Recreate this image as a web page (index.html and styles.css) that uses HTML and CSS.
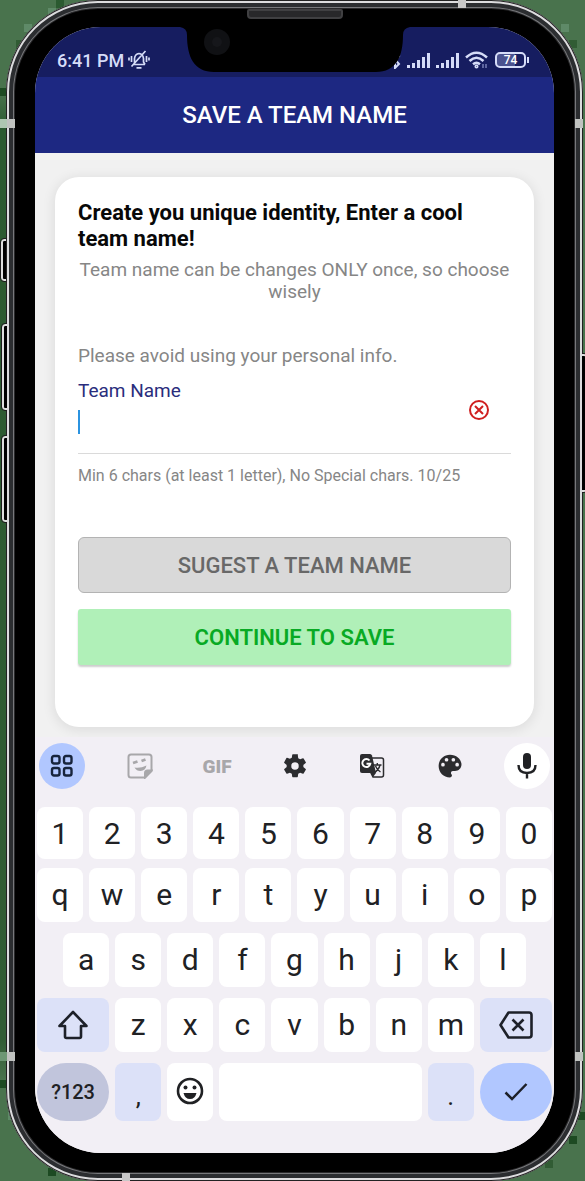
FILE: index.html
```
<!DOCTYPE html>
<html lang="en">
<head>
<meta charset="utf-8">
<meta name="viewport" content="width=device-width, initial-scale=1">
<title>Save a team name</title>
<link rel="stylesheet" href="styles.css">
</head>
<body>
<div class="phone">
  <span class="side-button mute"></span>
  <span class="side-button volume-up"></span>
  <span class="side-button volume-down"></span>
  <span class="side-button power"></span>
  <span class="band band-top-left"></span>
  <span class="band band-top-right"></span>
  <span class="band band-bottom-left"></span>
  <span class="band band-bottom-right"></span>
  <span class="band-flat band-top"></span>
  <span class="band-flat band-bottom"></span>
  <span class="speaker"></span>
  <div class="screen">
    <svg class="notch" width="230" height="46" viewBox="0 0 230 46" aria-hidden="true">
      <path d="M0 0Q7 1 7 8C7 30 14 45 34 45H196C216 45 223 30 223 8Q223 1 230 0Z"/>
      <circle cx="37" cy="15" r="13" fill="#101114"/><circle cx="37" cy="15" r="5" fill="#16171b"/>
    </svg>
    <div class="status">
      <span class="time">6:41 PM</span>
      <svg class="bell" width="22" height="20" viewBox="0 0 22 20" fill="none" stroke="#d5dcf8" stroke-width="1.7" aria-hidden="true">
        <path d="M5 14.500h12M6.500 14V8.500Q7 4 11 3.500Q15 4 15.500 8.500V12l1.500 2.500M3.500 16.500L17.500 1M8.500 17.800h5M3.500 6v6M1 7.500v3M18.500 6v6M21 7.500v3"/>
      </svg>
      <div class="indicators">
        <svg class="bluetooth" width="10" height="18" viewBox="0 0 10 18" fill="none" stroke="#d5dcf8" stroke-width="2" aria-hidden="true"><path d="M1 5l7 8-4 4V1l4 4-7 8"/></svg>
        <svg width="24" height="16" viewBox="0 0 24 16" fill="#d5dcf8" aria-hidden="true"><path d="M0 13h3v3H0zM5 11h3v5H5zM10 8h3v8h-3zM15 5h3v11h-3zM20 1h3v15h-3z"/></svg>
        <svg width="24" height="16" viewBox="0 0 24 16" fill="#d5dcf8" aria-hidden="true"><path d="M0 13h3v3H0zM5 11h3v5H5zM10 8h3v8h-3zM15 5h3v11h-3zM20 1h3v15h-3z"/></svg>
        <svg width="23" height="18" viewBox="0 0 23 18" fill="none" stroke="#d5dcf8" stroke-width="2.500" aria-hidden="true"><path d="M1 6.500Q11.500-3 22 6.500M4.500 10Q11.500 3.500 18.500 10M8 13.300Q11.500 10.500 15 13.300"/><circle cx="11.500" cy="15.500" r=".8"/><path d="M18 13v4M21 13v4" stroke="#8f98cc" stroke-width="1.200"/></svg>
        <span class="battery">74</span>
      </div>
    </div>
    <header class="app-bar"><h1>SAVE A TEAM NAME</h1></header>
    <main class="content">
      <form class="card">
        <h2>Create you unique identity, Enter a cool team name!</h2>
        <p class="note">Team name can be changes ONLY once, so choose wisely</p>
        <p class="advice">Please avoid using your personal info.</p>
        <div class="field">
          <div class="field-text">
            <label for="team">Team Name</label>
            <input id="team" type="text" autocomplete="off">
          </div>
          <button class="clear" type="button" aria-label="Clear">
            <svg width="22" height="22" viewBox="0 0 22 22" fill="none" stroke="#cf1f1f" stroke-width="2"><circle cx="11" cy="11" r="9"/><path d="M7 7l8 8M15 7l-8 8"/></svg>
          </button>
        </div>
        <p class="helper">Min 6 chars (at least 1 letter), No Special chars. 10/25</p>
        <button class="action suggest" type="button">SUGEST A TEAM NAME</button>
        <button class="action save" type="button">CONTINUE TO SAVE</button>
      </form>
    </main>
    <section class="keyboard" aria-label="Keyboard">
      <div class="tools">
        <button class="tool round blue" aria-label="Menu"><svg width="24" height="24" viewBox="0 0 24 24" fill="none" stroke="#17243d" stroke-width="2.400"><rect x="2" y="2" width="7.500" height="7.500" rx="2"/><rect x="14" y="2" width="7.500" height="7.500" rx="2"/><rect x="2" y="14" width="7.500" height="7.500" rx="2"/><rect x="14" y="14" width="7.500" height="7.500" rx="2"/></svg></button>
        <button class="tool" aria-label="Stickers"><svg width="26" height="26" viewBox="0 0 26 26" fill="none" stroke="#a8a7aa" stroke-width="2"><path d="M4 1.500h18q2.500 0 2.500 2.500v14l-6.500 6.500H4Q1.500 24.500 1.500 22V4Q1.500 1.500 4 1.500Z"/><path d="M24.500 17.500h-4q-2.500 0-2.500 2.500v4.500Z" fill="#a8a7aa"/><path d="M6 10l4.500-1.500M14.500 8l4-1.500" stroke-width="2.800"/><path d="M7.500 14.500q6 1 12-2q-1 5-6 5.500q-4 0-6-3.500Z" fill="#a8a7aa" stroke="none"/></svg></button>
        <button class="tool gif">GIF</button>
        <button class="tool" aria-label="Settings"><svg width="28" height="28" viewBox="0 0 24 24" fill="#2c2c2f"><path d="M19.140 12.940c.04-.3.060-.61.060-.94s-.02-.64-.07-.94l2.030-1.580a.49.490 0 0 0 .12-.61l-1.920-3.320a.49.490 0 0 0-.59-.22l-2.390.96a7 7 0 0 0-1.620-.94l-.36-2.540A.48.480 0 0 0 13.920 2h-3.840a.48.480 0 0 0-.47.410l-.36 2.540c-.59.240-1.130.57-1.620.94l-2.390-.96a.49.490 0 0 0-.59.220L2.740 8.870a.48.480 0 0 0 .12.610l2.030 1.580a7.500 7.500 0 0 0 0 1.880l-2.030 1.580a.49.490 0 0 0-.12.610l1.920 3.320c.12.220.37.290.59.220l2.390-.96c.5.380 1.030.7 1.620.94l.36 2.540c.05.240.24.410.47.410h3.840c.24 0 .44-.17.470-.41l.36-2.540a7 7 0 0 0 1.620-.94l2.390.96c.22.080.47 0 .59-.22l1.920-3.320a.48.480 0 0 0-.12-.61zM12 15.200a3.200 3.200 0 1 1 0-6.400 3.200 3.200 0 0 1 0 6.400z"/></svg></button>
        <button class="tool" aria-label="Translate"><svg width="26" height="26" viewBox="0 0 26 26"><path d="M13 5h9.500Q24.500 5 24.500 7v15q0 2-2 2H14l-3-6" fill="none" stroke="#2c2c2f" stroke-width="1.500"/><path d="M3 1h8q1.500 0 2 1.500L17 20H3q-2 0-2-2V3q0-2 2-2Z" fill="#2c2c2f"/><path d="M10.500 7.500a4 4 0 1 0 .8 3.300H7.500" fill="none" stroke="#fff" stroke-width="1.900"/><path d="M14.500 12h8M18.300 10v2M21 12q-1 4.500-6 8M16.500 13q1.500 4 5 6" fill="none" stroke="#2c2c2f" stroke-width="1.400"/><path d="M12 20h5l-3 4Z" fill="#2c2c2f"/></svg></button>
        <button class="tool" aria-label="Themes"><svg width="26" height="26" viewBox="0 0 24 24" fill="#2c2c2f"><path d="M12 1.500C6 1.500 1.500 6 1.500 12S6 22.500 12 22.500a1.800 1.800 0 0 0 1.300-3c-.3-.3-.4-.7-.4-1.100 0-1 .8-1.700 1.700-1.700h2c3.300 0 6-2.700 6-6 0-5.100-4.800-9.200-10.600-9.200zM5.500 12.500a1.700 1.700 0 1 1 0-3.400 1.700 1.700 0 0 1 0 3.400zm3.300-4.600a1.700 1.700 0 1 1 0-3.400 1.700 1.700 0 0 1 0 3.400zm6.300 0a1.700 1.700 0 1 1 0-3.400 1.700 1.700 0 0 1 0 3.400zm3.500 4.600a1.700 1.700 0 1 1 0-3.400 1.700 1.700 0 0 1 0 3.400z"/></svg></button>
        <button class="tool round white" aria-label="Voice"><svg width="22" height="28" viewBox="0 0 22 28"><rect x="7" y="1" width="8" height="16" rx="4" fill="#202124"/><path d="M2.500 13q0 8 8.500 8t8.500-8M11 21v5.500" fill="none" stroke="#202124" stroke-width="2.400"/></svg></button>
      </div>
      <div class="keys digits">
        <button class="key">1</button><button class="key">2</button><button class="key">3</button><button class="key">4</button><button class="key">5</button><button class="key">6</button><button class="key">7</button><button class="key">8</button><button class="key">9</button><button class="key">0</button>
      </div>
      <div class="keys letters">
        <button class="key">q</button><button class="key">w</button><button class="key">e</button><button class="key">r</button><button class="key">t</button><button class="key">y</button><button class="key">u</button><button class="key">i</button><button class="key">o</button><button class="key">p</button>
        <button class="key indent">a</button><button class="key">s</button><button class="key">d</button><button class="key">f</button><button class="key">g</button><button class="key">h</button><button class="key">j</button><button class="key">k</button><button class="key">l</button>
        <button class="key wide tint shift" aria-label="Shift"><svg width="32" height="30" viewBox="0 0 32 30" fill="none" stroke="#1d2029" stroke-width="2.600" stroke-linejoin="round"><path d="M16 2L2.500 16H8v10.500q0 1.500 1.500 1.500h13q1.500 0 1.500-1.500V16h5.500Z"/></svg></button><button class="key">z</button><button class="key">x</button><button class="key">c</button><button class="key">v</button><button class="key">b</button><button class="key">n</button><button class="key">m</button><button class="key wide tint" aria-label="Backspace"><svg width="34" height="28" viewBox="0 0 34 28" fill="none" stroke="#1d2029" stroke-width="2.600" stroke-linejoin="round"><path d="M9.500 1.500H30q2.500 0 2.500 2.500v20q0 2.500-2.500 2.500H9.500L1.500 14Z"/><path d="M13.500 8.500l11 11M24.500 8.500l-11 11"/></svg></button>
        <button class="key wide pill symbols">?123</button><button class="key tint mark">,</button><button class="key" aria-label="Emoji"><svg width="28" height="28" viewBox="0 0 28 28" fill="none" stroke="#202124" stroke-width="2.600"><circle cx="14" cy="14" r="12"/><path d="M7.500 16h13q-1.500 6-6.500 6t-6.500-6Z" fill="#202124" stroke="none"/><circle cx="9.500" cy="10.500" r="2" fill="#202124" stroke="none"/><circle cx="18.500" cy="10.500" r="2" fill="#202124" stroke="none"/></svg></button><button class="key space" aria-label="Space"></button><button class="key tint mark">.</button><button class="key wide pill done" aria-label="Done"><svg width="24" height="20" viewBox="0 0 24 20" fill="none" stroke="#1d2029" stroke-width="2.500"><path d="M1.500 10.500L8 17L22.500 2"/></svg></button>
      </div>
    </section>
  </div>
</div>
</body>
</html>
```
FILE: styles.css
```
* { box-sizing: border-box; }

/* blocky green backdrop: darker tiles follow the phone's rounded corners */
body {
  margin: 0;
  min-height: 100vh;
  display: flex;
  font-family: Roboto, "Liberation Sans", sans-serif;
  background:
    linear-gradient(#5f8a68, #5f8a68) 48px 8px / 8px 8px no-repeat,
    linear-gradient(#2b5a30, #2b5a30) 56px 0 / 8px 8px no-repeat,
    linear-gradient(#5f8a68, #5f8a68) 24px 24px / 8px 8px no-repeat,
    linear-gradient(#315c34, #315c34) 16px 40px / 8px 16px no-repeat,
    linear-gradient(#1d4a22, #1d4a22) 0 88px / 8px 8px no-repeat,
    linear-gradient(#315c34, #315c34) right 8px top 40px / 8px 8px no-repeat,
    linear-gradient(#5f8a68, #5f8a68) right 16px top 24px / 8px 8px no-repeat,
    linear-gradient(#1d4a22, #1d4a22) 0 1080px / 8px 8px no-repeat,
    linear-gradient(#5f8a68, #5f8a68) 8px 1112px / 8px 8px no-repeat,
    linear-gradient(#1d4a22, #1d4a22) 48px 1168px / 8px 8px no-repeat,
    linear-gradient(#1d4a22, #1d4a22) right 0 top 1112px / 8px 8px no-repeat,
    linear-gradient(#1d4a22, #1d4a22) right 8px top 1136px / 8px 8px no-repeat,
    linear-gradient(#315c34, #315c34) right 32px top 1160px / 8px 8px no-repeat,
    linear-gradient(transparent 90px, #2b5a30 130px, #315c34 1040px, transparent 1080px) left / 50% 100% no-repeat,
    #49734d;
  overflow-x: hidden;
}

h1, h2, p { margin: 0; }

button {
  border: 0;
  padding: 0;
  font-family: inherit;
  background: none;
}

svg { display: block; flex: none; }

.phone {
  position: relative;
  flex: 1;
  display: flex;
  margin: 0 2px 0 6px;
  padding: 27px 29px 28px;
  border-radius: 92px;
  background: #000;
  box-shadow:
    inset 0 0 0 1px #222,
    inset 0 0 0 3px #dcdcde,
    inset 0 0 0 7px #2b2d30,
    inset 0 0 0 8px #77787b,
    inset 0 0 0 9px #29292b;
}

.side-button {
  position: absolute;
  left: -4px;
  width: 6px;
  height: 90px;
  border: 2px solid #dedede;
  border-right: 0;
  border-radius: 3px 0 0 3px;
  background: #000;
  outline: 1px solid #1c1c1c;
  clip-path: inset(-1px 1px -1px -1px);
}

.mute { top: 239px; height: 42px; left: -5px; }
.volume-up { top: 324px; height: 86px; }
.volume-down { top: 436px; height: 86px; }
.power {
  top: 354px;
  left: auto;
  right: -4px;
  height: 138px;
  transform: scaleX(-1);
}

.band {
  position: absolute;
  width: 8px;
  height: 9px;
  background: #c0c2c0;
}
.band-top-left {
  left: -6px;
  top: 119px;
  width: 15px;
  background: linear-gradient(90deg, #aec7b2 50%, #c0c2c0 50%);
}
.band-top-right { right: 0; top: 119px; }
.band-bottom-left {
  left: -6px;
  top: 1052px;
  width: 15px;
  background: linear-gradient(90deg, #6d9774 45%, #c0c2c0 45%);
}
.band-bottom-right { right: 0; top: 1052px; }

.band-flat {
  position: absolute;
  width: 8px;
  height: 8px;
  background: #c8c8c8;
}
.band-top { top: 0; right: 117px; }
.band-bottom { bottom: 0; left: 116px; }

.speaker {
  position: absolute;
  top: 9px;
  left: 50%;
  width: 96px;
  height: 10px;
  margin-left: -48px;
  border: 2px solid #404042;
  border-radius: 2px 2px 4px 4px;
  background: #28282a;
}

.screen {
  position: relative;
  flex: 1;
  min-width: 0;
  display: flex;
  flex-direction: column;
  border-radius: 66px;
  overflow: hidden;
  background: #f0f0f0;
}

/* keep the notch above the status bar */
.notch {
  position: absolute;
  z-index: 1;
  top: 0;
  left: 50%;
  margin-left: -115px;
}

.status {
  display: flex;
  align-items: center;
  height: 50px;
  padding: 16px 28px 0 22px;
  background: #161d60;
  color: #d5dcf8;
}

.time { font-size: 18px; font-weight: 500; }
.bell { margin-left: 4px; }

.indicators {
  display: flex;
  align-items: center;
  gap: 5px;
  margin-left: auto;
}

.bluetooth { margin-right: 1px; }

.battery {
  position: relative;
  width: 31px;
  height: 16px;
  margin-left: 2px;
  border: 2px solid #d5dcf8;
  border-radius: 5px;
  background: linear-gradient(90deg, #4a528f 65%, #161d60 65%);
  color: #fff;
  font-size: 12px;
  line-height: 12px;
  font-weight: 500;
  text-align: center;
}

.battery::after {
  content: "";
  position: absolute;
  top: 3px;
  right: -5px;
  width: 2px;
  height: 6px;
  background: #d5dcf8;
}

.app-bar {
  display: flex;
  align-items: center;
  justify-content: center;
  height: 76px;
  background: #1d2882;
}

.app-bar h1 {
  color: #fff;
  font-size: 24px;
  font-weight: 500;
}

.content {
  padding: 24px 20px 10px;
  background: #f1f1f1;
}

.card {
  display: flex;
  flex-direction: column;
  padding: 23px 23px 62px;
  border-radius: 24px;
  background: #fff;
  box-shadow: 0 2px 12px 2px #00000014;
}

.card h2 {
  color: #080808;
  font-size: 22px;
  line-height: 26px;
  font-weight: 700;
}

.note, .advice {
  color: #868686;
  font-size: 19px;
  line-height: 22px;
}

.note { margin-top: 7px; text-align: center; }
.advice { margin-top: 42px; }

.field {
  display: flex;
  align-items: center;
  margin-top: 12px;
  padding-bottom: 12px;
  border-bottom: 1px solid #dadada;
}

.field-text {
  flex: 1;
  display: flex;
  flex-direction: column;
}

.field label {
  color: #2a2d7c;
  font-size: 19px;
  line-height: 24px;
}

.field input {
  width: 100%;
  height: 38px;
  padding: 0 8px;
  border: 0;
  outline: 0;
  font: inherit;
  font-size: 18px;
  background: linear-gradient(#2b93e0, #2b93e0) left center / 2px 24px no-repeat;
}

.clear { margin-right: 21px; }

.helper {
  margin-top: 12px;
  color: #868686;
  font-size: 16px;
  line-height: 20px;
}

.action {
  height: 56px;
  border-radius: 6px;
  font-size: 22px;
  font-weight: 500;
}

.suggest {
  margin-top: 51px;
  border: 1px solid #b3b3b3;
  background: #d9d9d9;
  color: #686868;
}

.save {
  margin-top: 16px;
  border-radius: 3px;
  background: #b0f0b8;
  color: #08aa24;
  font-weight: 600;
  box-shadow: 0 2px 2px #0003;
}

.keyboard {
  flex: 1;
  padding: 6px 2px 31px;
  background: #f2eff5;
}

.tools {
  display: flex;
  justify-content: space-between;
  padding: 0 2px;
  margin-bottom: 18px;
}

.tool {
  display: flex;
  align-items: center;
  justify-content: center;
  width: 46px;
  height: 46px;
}

.round { border-radius: 50%; }
.blue { background: #b1c7ff; }
.white { background: #fff; }

.gif {
  color: #a8a7aa;
  font-size: 19px;
  font-weight: 900;
}

.keys {
  display: grid;
  grid-template-columns: repeat(20, minmax(0, 1fr));
  gap: 11px 6px;
}

.digits { grid-auto-rows: 52px; margin-bottom: 9px; }
.letters { grid-template-rows: 54px 54px 54px 58px; }

.key {
  grid-column: span 2;
  display: flex;
  align-items: center;
  justify-content: center;
  border-radius: 8px;
  background: #fff;
  color: #202124;
  font-size: 30px;
}

.letters .key { padding-bottom: 2px; }

.letters .indent { grid-column: 2 / span 2; }
.letters .wide { grid-column: span 3; padding: 0; }
.letters .shift { grid-column: 1 / span 3; }
.letters .space { grid-column: span 8; }
.tint { background: #dce1f8; }
.pill { border-radius: 29px; }

.letters .mark {
  padding: 8px 0 0;
  font-size: 26px;
}

.symbols {
  background: #c1c5dc;
  font-size: 20px;
  font-weight: 500;
}

.done { background: #b1c7ff; }
```
